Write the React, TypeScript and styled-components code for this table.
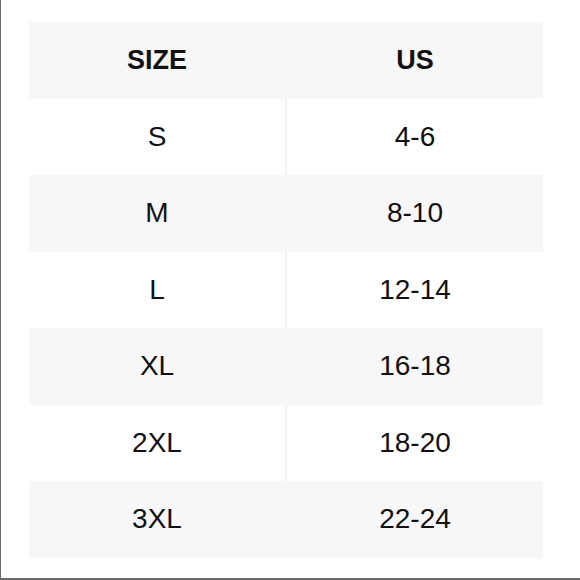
import { createGlobalStyle, styled } from "styled-components";

const GlobalStyle = createGlobalStyle`
    html, body {
        margin: 0;
        padding: 0;
        background: #ffffff;
    }
    body {
        font-family: "Liberation Sans", Arial, sans-serif;
        color: #111111;
    }
`

const rows = [
    { size: "S", us: "4-6" },
    { size: "M", us: "8-10" },
    { size: "L", us: "12-14" },
    { size: "XL", us: "16-18" },
    { size: "2XL", us: "18-20" },
    { size: "3XL", us: "22-24" },
]

function App() {
    return (
        <>
            <GlobalStyle />
            <Page>
                <Table>
                    <Row $shade>
                        <Cell $bold>SIZE</Cell>
                        <Cell $bold>US</Cell>
                    </Row>
                    {rows.map((row, i) => (
                        <Row key={row.size} $shade={i % 2 === 1}>
                            <Cell>{row.size}</Cell>
                            <Cell>{row.us}</Cell>
                        </Row>
                    ))}
                </Table>
            </Page>
        </>
    )
}

const Page = styled.div`
    width: 580px;
    height: 580px;
    box-sizing: border-box;
    border-left: 1px solid #6a6a6a;
    border-bottom: 2px solid #6a6a6a;
    padding: 22px 0 0 28px;
`

const Table = styled.div`
    width: 514px;
    display: grid;
    grid-template-rows: repeat(7, 76.5px);
`

// 흰 줄에서는 가운데 구분선이 살짝 보임
const Row = styled.div<{ $shade?: boolean }>`
    display: grid;
    grid-template-columns: 1fr 1fr;
    column-gap: 2px;
    background: ${(p) => (p.$shade ? "#f7f7f7" : "#f2f2f2")};
    & > div {
        background: ${(p) => (p.$shade ? "#f7f7f7" : "#ffffff")};
    }
`

const Cell = styled.div<{ $bold?: boolean }>`
    display: flex;
    align-items: center;
    justify-content: center;
    font-size: ${(p) => (p.$bold ? "27px" : "28px")};
    font-weight: ${(p) => (p.$bold ? 700 : 400)};
    color: #111111;
`

export default App
